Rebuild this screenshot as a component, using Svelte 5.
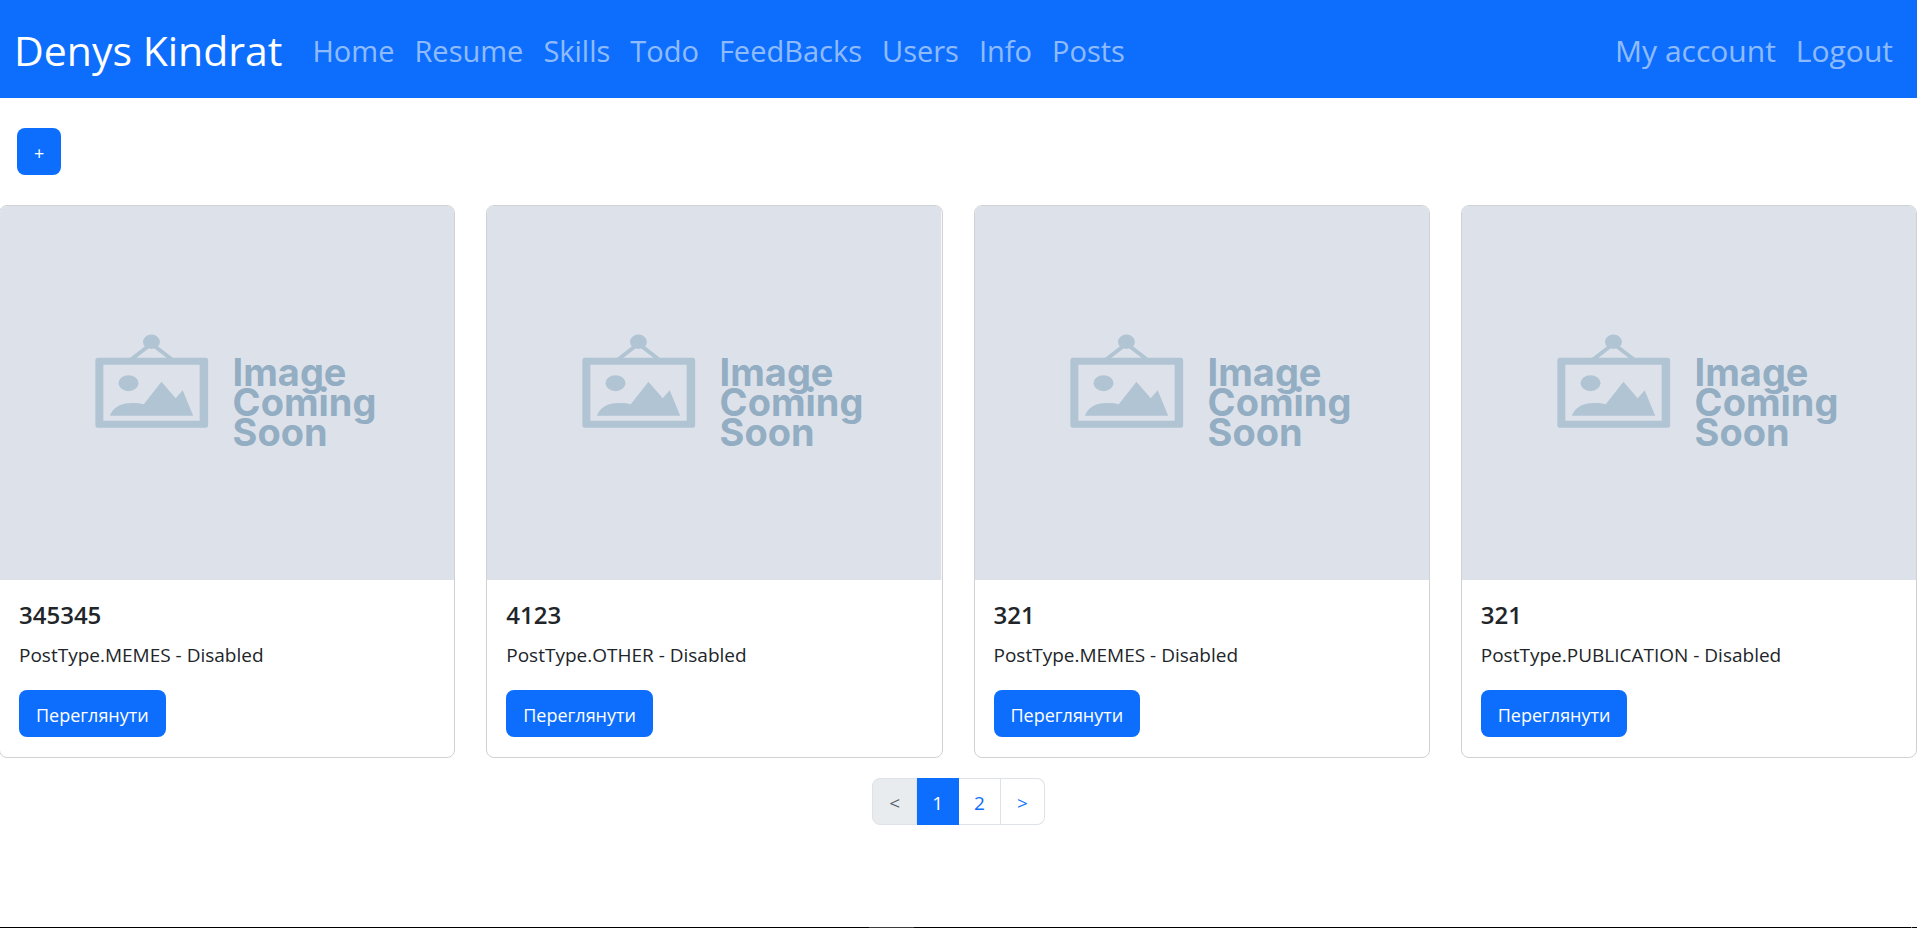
<script>
  const links = ['Home', 'Resume', 'Skills', 'Todo', 'FeedBacks', 'Users', 'Info', 'Posts'];
  const accountLinks = ['My account', 'Logout'];
  const posts = [
    { title: '345345', type: 'PostType.MEMES', status: 'Disabled' },
    { title: '4123', type: 'PostType.OTHER', status: 'Disabled' },
    { title: '321', type: 'PostType.MEMES', status: 'Disabled' },
    { title: '321', type: 'PostType.PUBLICATION', status: 'Disabled' }
  ];
</script>

<div class="page">
  <nav class="navbar">
    <a class="brand" href="#home">Denys Kindrat</a>
    <ul class="links">
      {#each links as link}
        <li><a href="#{link}">{link}</a></li>
      {/each}
    </ul>
    <ul class="links account">
      {#each accountLinks as link}
        <li><a href="#{link}">{link}</a></li>
      {/each}
    </ul>
  </nav>

  <main>
    <div class="toolbar">
      <a class="btn" href="#new">+</a>
    </div>

    <div class="cards">
      {#each posts as post}
        <article class="card">
          <svg class="cover" viewBox="0 0 455 375">
            <rect width="455" height="375" fill="#dde2ea" />
            <g fill="#b1c4d3">
              <path
                fill-rule="evenodd"
                d="M98 152H206Q208.500 152 208.500 155V219Q208.500 222 206 222H98Q95.500 222 95.500 219V155Q95.500 152 98 152ZM103.500 159V215H200V159Z"
              />
              <path d="M131 154L151.700 138L172.500 154" fill="none" stroke="#b1c4d3" stroke-width="4" />
              <ellipse cx="151.700" cy="136" rx="8.500" ry="7.200" />
              <ellipse cx="128.700" cy="177.500" rx="10" ry="8" />
              <path d="M110 210C113 202 120 198 129 197.500C135 197 140 197.500 144 198.500L161.700 176L176 192.500L183 184.500L193.500 210Z" />
            </g>
            <g class="cover-text">
              <text x="233" y="180">Image</text>
              <text x="233" y="210">Coming</text>
              <text x="233" y="240">Soon</text>
            </g>
          </svg>
          <div class="card-body">
            <h5>{post.title}</h5>
            <p>{post.type} - {post.status}</p>
            <a class="btn" href="#post">Переглянути</a>
          </div>
        </article>
      {/each}
    </div>

    <ul class="pagination">
      <li><a class="disabled" href="#prev">&lt;</a></li>
      <li><a class="active" href="#page1">1</a></li>
      <li><a href="#page2">2</a></li>
      <li><a href="#next">&gt;</a></li>
    </ul>
  </main>

  <div class="edge"><span class="segment"></span><span class="tick"></span></div>
</div>

<style>
  :global(body) {
    margin: 0;
    background: #fff;
  }
  .page {
    display: flex;
    flex-direction: column;
    min-height: 100vh;
    overflow-x: hidden;
    font: 19px/30px 'Open Sans', 'Noto Sans', sans-serif;
    color: #212529;
  }
  .page * {
    box-sizing: border-box;
  }
  a {
    text-decoration: none;
  }
  ul {
    display: flex;
    margin: 0;
    padding: 0;
    list-style: none;
  }
  .navbar {
    display: flex;
    align-items: center;
    min-height: 98px;
    padding: 0 14px;
    background: #0d6efd;
  }
  .brand {
    margin-right: 20px;
    padding-top: 2px;
    font-size: 41px;
    line-height: 60px;
    color: #fff;
    white-space: nowrap;
  }
  .links {
    padding-top: 4px;
    font-size: 29px;
    line-height: 48px;
    white-space: nowrap;
  }
  .links a {
    display: block;
    padding: 0 10px;
    color: rgba(255, 255, 255, 0.55);
  }
  .account {
    margin-left: auto;
    font-size: 30px;
  }
  .toolbar {
    display: flex;
    padding: 30px 17px;
  }
  .btn {
    display: inline-block;
    height: 47px;
    padding: 10px 17px 7px;
    border-radius: 8px;
    background: #0d6efd;
    font-size: 18px;
    color: #fff;
  }
  .cards {
    display: grid;
    grid-template-columns: repeat(4, 1fr);
    gap: 31px;
    margin-left: -1px;
  }
  .card {
    border: 1px solid #d0d1d2;
    border-radius: 8px;
    overflow: hidden;
  }
  .cover {
    display: block;
    width: 100%;
  }
  .cover-text {
    font: 700 38px Inter, sans-serif;
    fill: #93adc3;
  }
  .card-body {
    display: flex;
    flex-direction: column;
    align-items: flex-start;
    padding: 20px 19px;
  }
  h5 {
    margin: 0 0 10px;
    font-size: 24px;
    font-weight: 600;
    line-height: 30px;
  }
  p {
    margin: 0 0 20px;
  }
  .pagination {
    justify-content: center;
    margin: 20px 0;
  }
  .pagination a {
    display: block;
    height: 47px;
    padding: 9px 15px 6px;
    border: 1px solid #dee2e6;
    color: #0d6efd;
  }
  .pagination li + li a {
    border-left-width: 0;
  }
  .pagination li:first-child a {
    border-radius: 8px 0 0 8px;
    padding: 9px 16px 6px;
  }
  .pagination li:last-child a {
    border-radius: 0 8px 8px 0;
    padding: 9px 16px 6px;
  }
  .pagination .disabled {
    background: #e9ecef;
    color: #5a6067;
  }
  .pagination .active {
    border-color: #0d6efd;
    background: #0d6efd;
    color: #fff;
  }
  .edge {
    display: grid;
    grid-template-columns: 1fr 45px 1fr;
    height: 1px;
    margin-top: auto;
    padding: 0 5px 0 0;
    background: #000;
  }
  .segment {
    grid-column: 2;
    margin-left: -65px;
    margin-right: 65px;
    background: #3b3b3b;
  }
  .tick {
    justify-self: end;
    width: 1px;
    background: #777;
  }
</style>
